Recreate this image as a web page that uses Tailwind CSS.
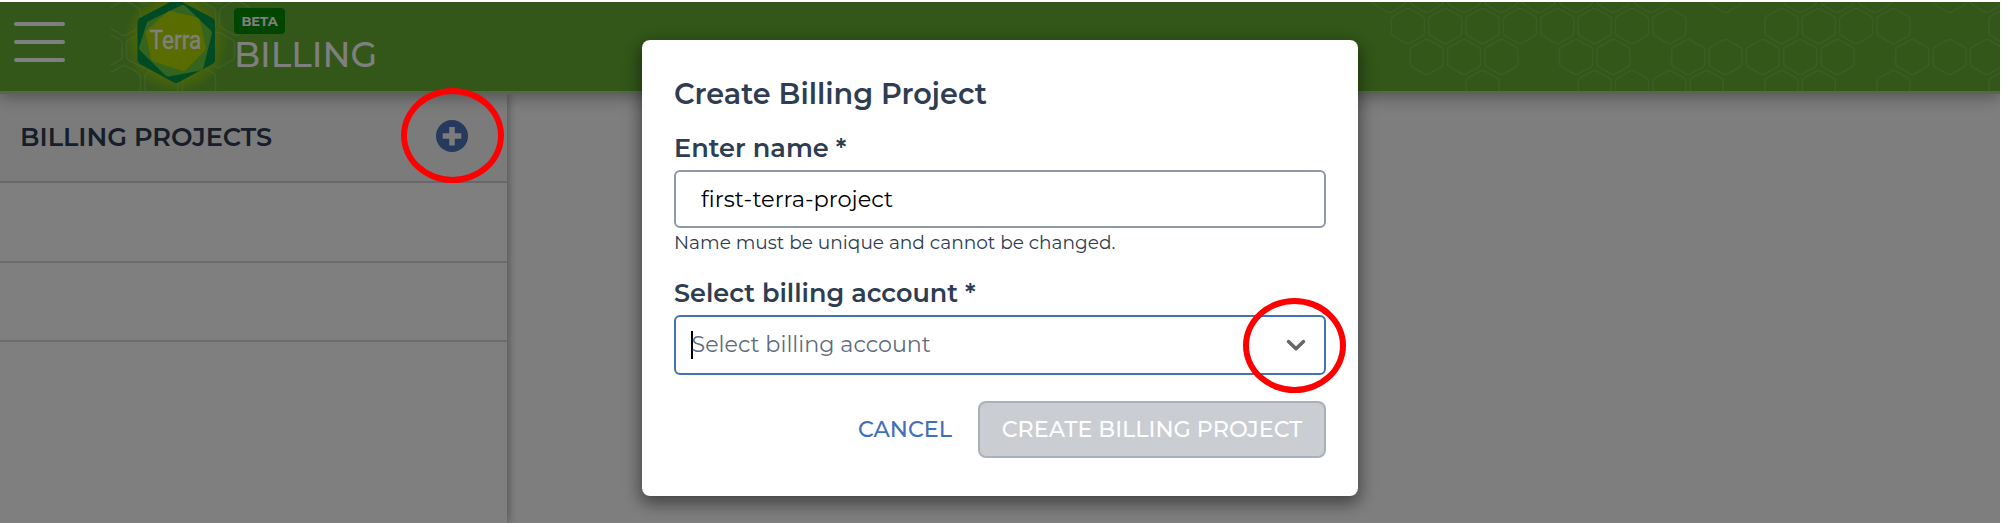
<!DOCTYPE html>
<html lang="en">
<head>
<meta charset="utf-8">
<title>Billing</title>
<script src="https://cdn.jsdelivr.net/npm/@tailwindcss/browser@4"></script>
</head>
<body class="bg-white overflow-hidden font-['Montserrat','Inter',sans-serif]">
<div class="relative mt-[2px] w-[2000px] h-[521px] overflow-hidden flex flex-col bg-[#fcfcfc] text-[#2e3d52]">

  <header class="relative z-10 shrink-0 h-[92px] bg-[#64ae30] border-b-[3px] border-[#aad294] shadow-[0_4px_14px_rgba(0,0,0,0.3)] flex">
    <svg class="absolute left-[111px] top-0" width="170" height="89" viewBox="111 2 170 89" fill="none" stroke="#fff" stroke-opacity=".17" stroke-width="1.5">
      <defs>
        <path id="hex" d="M-1.8-17.2Q0-18 1.8-17.2L14.6-9.8Q16.5-8.6 16.5-6.4V6.4Q16.5 8.6 14.6 9.8L1.8 17.2Q0 18-1.8 17.2L-14.6 9.8Q-16.5 8.6-16.5 6.4V-6.4Q-16.5-8.6-14.6-9.8Z"/>
      </defs>
      <use href="#hex" x="105.7" y="-14"/><use href="#hex" x="143" y="-14"/><use href="#hex" x="218" y="-14"/>
      <use href="#hex" x="124" y="18"/><use href="#hex" x="199" y="18"/><use href="#hex" x="236" y="18"/>
      <use href="#hex" x="105.7" y="50"/><use href="#hex" x="143" y="50"/><use href="#hex" x="218" y="50"/><use href="#hex" x="255" y="50" stroke-opacity=".07"/>
      <use href="#hex" x="124" y="83"/><use href="#hex" x="161.5" y="83"/><use href="#hex" x="199" y="83"/>
    </svg>
    <svg id="comb" class="absolute left-[1360px] top-0" width="640" height="89" viewBox="1360 2 640 89" fill="none" stroke="#fff" stroke-opacity=".14" stroke-width="1.5"></svg>

    <div class="relative flex items-start">
      <div class="ml-[14px] mt-5 w-[51px] flex flex-col gap-[14px]">
        <span class="h-1 rounded-xs bg-white"></span>
        <span class="h-1 rounded-xs bg-white"></span>
        <span class="h-1 rounded-xs bg-white"></span>
      </div>
      <svg class="ml-[55px]" width="112" height="89" viewBox="120 2 112 89">
        <defs><radialGradient id="glow"><stop offset=".68" stop-color="#b8dc00" stop-opacity=".6"/><stop offset="1" stop-color="#b8dc00" stop-opacity="0"/></radialGradient></defs>
        <circle cx="176" cy="41" r="53" fill="url(#glow)"/>
        <g stroke-linejoin="round">
          <path d="M176 4L210.500 22V60L176 78.500L142 60V22Z" fill="#009648" stroke="#009648" stroke-width="9"/>
          <path d="M150 24.500L183 8.500L208.500 33L200 67L168 73L142.500 48Z" fill="#6ac83e" stroke="#6ac83e" stroke-width="7"/>
          <path d="M170 15L196 21.500L202 48L183 67L155 58L149.500 33Z" fill="#b0d800" stroke="#b0d800" stroke-width="8"/>
        </g>
        <text x="149.500" y="49" font-family="Roboto,sans-serif" font-size="25.500" font-weight="400" fill="#fff" stroke="#fff" stroke-width=".3" textLength="52" lengthAdjust="spacingAndGlyphs">Terra</text>
      </svg>
      <div class="ml-[2px] pt-[6px] flex flex-col items-start">
        <span class="w-[51px] h-[26px] rounded-[4px] bg-[#008a00] text-white text-[13px] font-bold leading-[27px] text-center">BETA</span>
        <span class="text-white text-[34.500px] font-medium leading-[42px]">BILLING</span>
      </div>
    </div>
  </header>

  <div class="flex flex-1">
    <aside class="w-[507px] bg-white shadow-[2px_0_8px_rgba(0,0,0,0.3)]">
      <div class="h-[89px] bg-[#f6f6f7] border-b-2 border-[#ceced8] flex items-center justify-between pl-5 pr-[39px]">
        <h2 class="text-[25.600px] font-semibold">BILLING PROJECTS</h2>
        <svg class="mb-[4px]" width="32" height="32" viewBox="0 0 32 32"><circle cx="16" cy="16" r="16" fill="#4a74b8"/><path d="M16 7V25.500M6.700 16H25.300" stroke="#f6f6f7" stroke-width="5.500"/></svg>
      </div>
      <div class="h-[80px] border-b-2 border-[#d8d8d8]"></div>
      <div class="h-[79px] border-b-2 border-[#d8d8d8]"></div>
    </aside>
    <main class="flex-1"></main>
  </div>

  <div class="absolute inset-0 z-20 bg-black/50">
    <section class="mx-auto mt-[38px] w-[716px] h-[456px] rounded-[8px] bg-white shadow-[0_6px_16px_2px_rgba(0,0,0,0.45)] px-8 pt-[34px]">
      <h1 class="text-[28.700px] leading-10 font-semibold">Create Billing Project</h1>
      <label class="mt-[18px] block text-[25.600px] leading-8 font-semibold">Enter name *</label>
      <div class="mt-[6px] h-[58px] border-2 border-[#8f98a6] rounded-[6px] pl-[25px] text-[22.500px] leading-[54px] text-black">first-terra-project</div>
      <p class="mt-[2px] text-[18.550px] leading-[26px]">Name must be unique and cannot be changed.</p>
      <label class="mt-[21px] block text-[25.500px] leading-8 font-semibold">Select billing account *</label>
      <div class="mt-[6px] h-[60px] border-2 border-[#4472b0] rounded-[6px] pl-[15px] pr-[16px] flex items-center text-[22.200px] text-[#606c7e]">
        <span class="w-[1.500px] h-7 bg-black -mr-[1px]"></span>
        <span class="flex-1">Select billing account</span>
        <svg width="24" height="24" viewBox="0 0 24 24" fill="none" stroke="#666" stroke-width="3.500" stroke-linecap="round" stroke-linejoin="round"><path d="M4.500 8.500L12 15.800L19.500 8.500"/></svg>
      </div>
      <div class="mt-[26px] flex justify-end items-center gap-[26px] text-[22.300px] font-medium">
        <span class="text-[#4270b8]">CANCEL</span>
        <button class="w-[348px] h-[57px] rounded-[8px] border-2 border-[#a9b0bb] bg-[#cacdd2] text-white">CREATE BILLING PROJECT</button>
      </div>
    </section>
  </div>

  <div class="absolute z-30 left-[401px] top-[86px] w-[103px] h-[95px] rounded-[50%] border-[6px] border-[#f00]"></div>
  <div class="absolute z-30 left-[1243px] top-[296px] w-[103px] h-[95px] rounded-[50%] border-[6px] border-[#f00]"></div>
</div>
<script>
  // Honeycomb in the header: start x, centre y, occupied columns
  const rows = [
    [1426.7, -5, [-1,0,1,2,3,4,5,6,8,10,11,12,14,15]],
    [1407.9, 26, [0,1,2,3,4,5,6,7,10,11,12,13,16]],
    [1426.7, 57, [0,1,2,4,5,7,8,9,10,11,13,14,15]],
    [1407.9, 88, [2,5,6,7,8,10,11,13,16]]
  ];
  document.getElementById('comb').innerHTML = rows.map(([x, y, cols]) =>
    cols.map(k => `<use href="#hex" x="${x + k * 37.35}" y="${y}"/>`).join('')).join('');
</script>
</body>
</html>
